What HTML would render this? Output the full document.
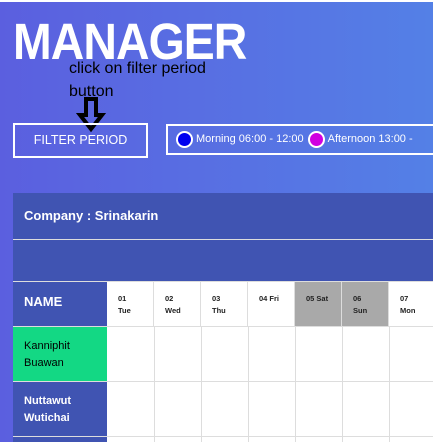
<!DOCTYPE html>
<html><head><style>
*{margin:0;padding:0;box-sizing:border-box}
html,body{width:433px;height:442px;overflow:hidden}
body{background:linear-gradient(90deg,#5b5fdf,#5480e6);font-family:"Liberation Sans",sans-serif;position:relative}
.top{position:absolute;left:0;top:0;width:433px;height:2px;background:#fff}
.title{position:absolute;left:13px;top:12px;font-size:51px;font-weight:bold;color:#fff;letter-spacing:-1px;transform:scaleX(0.91);transform-origin:left top}
.note{position:absolute;left:69px;top:57px;font-size:16px;line-height:23px;color:#000}
.btn{position:absolute;left:13px;top:123px;width:135px;height:35px;border:2px solid #fff;color:#fff;font-size:12.5px;text-align:center;line-height:31px}
.leg{position:absolute;left:166px;top:124px;width:280px;height:31px;border:2px solid #fff;color:#fff;font-size:11px;line-height:27px;white-space:nowrap}
.dot{display:inline-block;width:17px;height:17px;border-radius:50%;border:2px solid #fff;vertical-align:middle;margin:0 3px 0 8px}
.tbl{position:absolute;left:13px;top:193px;width:430px;height:260px;background:#fff;overflow:hidden}
.r{position:absolute;left:0;width:430px}
.c{position:absolute;border-right:1px solid #ddd;border-bottom:1px solid #ddd;font-size:7.5px;font-weight:bold;color:#222;padding:11px 0 0 11px;line-height:12px}
.n{position:absolute;left:0;width:94px;background:#4054b2;color:#fff;font-weight:bold;font-size:12px;padding-left:11px;border-bottom:1px solid #ddd}
</style></head><body>
<div class="top"></div>
<div class="title">MANAGER</div>
<div class="note">click on filter period<br>button</div>
<svg style="position:absolute;left:76px;top:97px" width="30" height="36"><path d="M10 2h10v16h6L15 32 4 18h6z" fill="none" stroke="#000" stroke-width="4"/></svg>
<div class="btn">FILTER PERIOD</div>
<div class="leg"><span class="dot" style="background:#0000f0"></span>Morning 06:00 - 12:00<span class="dot" style="background:#d000e0;margin-left:4px"></span>Afternoon 13:00 -</div>
<div class="tbl">
<div class="r" style="top:0;height:47px;background:#4054b2;border-bottom:1px solid #ddd;color:#fff;font-weight:bold;font-size:13px;padding:15px 0 0 11px">Company : Srinakarin</div>
<div class="r" style="top:47px;height:42px;background:#4054b2;border-bottom:1px solid #ddd"></div>
<div class="n" style="top:89px;height:45px;font-size:13px;line-height:40px">NAME</div>
<div class="c" style="left:94px;top:89px;width:47px;height:45px">01<br>Tue</div>
<div class="c" style="left:141px;top:89px;width:47px;height:45px">02<br>Wed</div>
<div class="c" style="left:188px;top:89px;width:47px;height:45px">03<br>Thu</div>
<div class="c" style="left:235px;top:89px;width:47px;height:45px">04 Fri</div>
<div class="c" style="left:282px;top:89px;width:47px;height:45px;background:#a9a9a9">05 Sat</div>
<div class="c" style="left:329px;top:89px;width:47px;height:45px;background:#a9a9a9">06<br>Sun</div>
<div class="c" style="left:376px;top:89px;width:54px;height:45px">07<br>Mon</div>
<div class="n" style="top:134px;height:55px;background:#13d884;color:#000;font-weight:normal;font-size:11px;padding-top:11px;line-height:17px">Kanniphit<br>Buawan</div>
<div class="n" style="top:189px;height:55px;font-size:11px;padding-top:11px;line-height:17px">Nuttawut<br>Wutichai</div>
<div class="n" style="top:244px;height:20px"></div>
<svg style="position:absolute;left:94px;top:134px" width="336" height="130"><g stroke="#ddd" stroke-width="1"><path d="M47.5 0v130M94.5 0v130M141.5 0v130M188.5 0v130M235.5 0v130M282.5 0v130M0 54.5h336M0 109.5h336"/></g></svg>
</div>
</body></html>
